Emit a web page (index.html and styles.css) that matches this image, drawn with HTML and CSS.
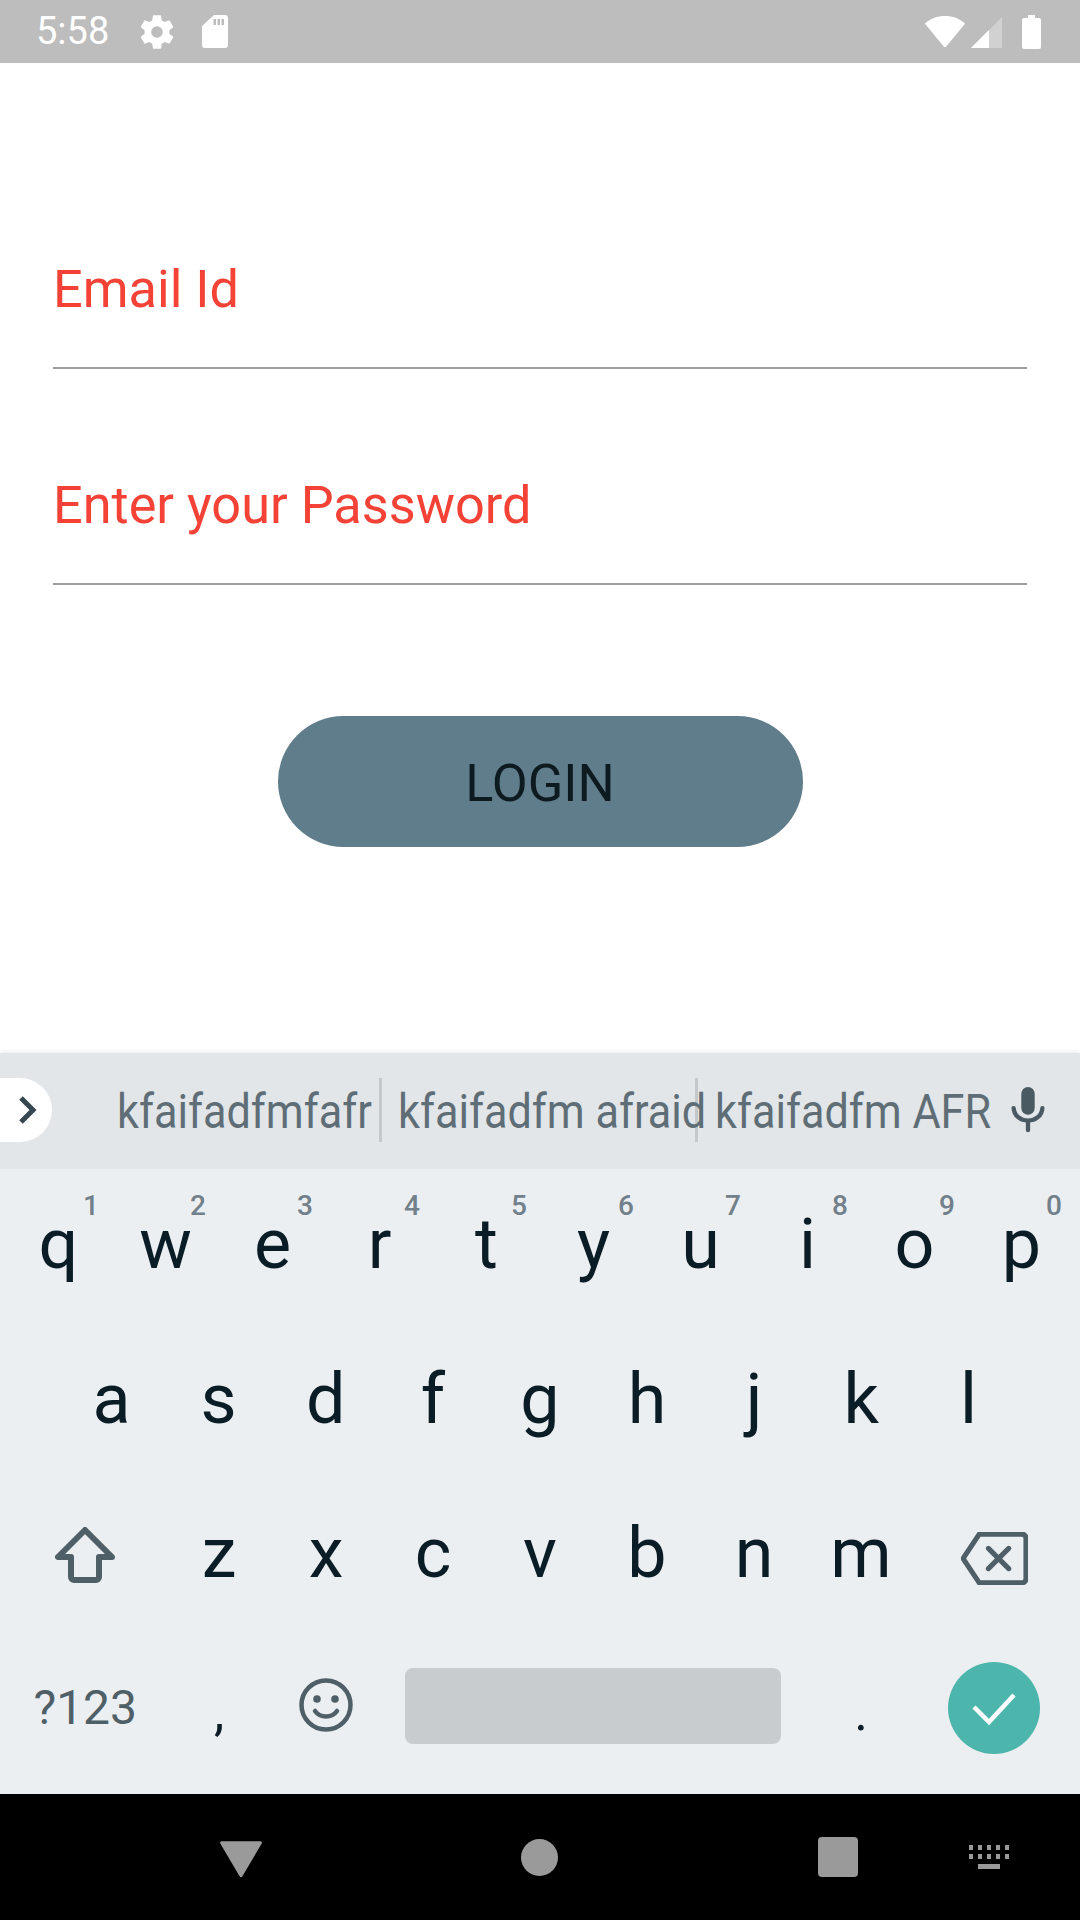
FILE: index.html
```html
<!DOCTYPE html>
<html lang="en">
<head>
<meta charset="utf-8">
<title>Login</title>
<link rel="stylesheet" href="styles.css">
</head>
<body>
<div class="screen">
  <header class="status">
    <span class="time">5:58</span>
    <svg class="ic-gear" viewBox="0 0 24 24"><path d="M19.4 13c.04-.32.07-.66.07-1s-.03-.68-.07-1l2.11-1.65a.5.5 0 0 0 .12-.64l-2-3.46a.5.5 0 0 0-.61-.22l-2.49 1a7.3 7.3 0 0 0-1.69-.98l-.38-2.65A.49.49 0 0 0 14 2h-4a.49.49 0 0 0-.49.42l-.38 2.65c-.61.25-1.17.59-1.69.98l-2.49-1a.49.49 0 0 0-.61.22l-2 3.46a.49.49 0 0 0 .12.64L4.57 11c-.04.32-.07.66-.07 1s.03.68.07 1l-2.11 1.65a.5.5 0 0 0-.12.64l2 3.46c.12.22.39.3.61.22l2.49-1c.52.4 1.08.73 1.69.98l.38 2.65c.03.24.24.42.49.42h4c.25 0 .46-.18.49-.42l.38-2.65c.61-.25 1.17-.59 1.69-.98l2.49 1c.23.09.49 0 .61-.22l2-3.46a.5.5 0 0 0-.12-.64L19.4 13zM12 15.500a3.500 3.500 0 1 1 0-7 3.500 3.500 0 0 1 0 7z"/></svg>
    <svg class="ic-sd" viewBox="0 0 26 33"><path fill-rule="evenodd" d="M12 0h11a3 3 0 0 1 3 3v27a3 3 0 0 1-3 3H3a3 3 0 0 1-3-3V11zM11.500 4v6H14V4zm4 0v6H18V4zm4 0v6H22V4z"/></svg>
    <span class="spacer"></span>
    <svg class="ic-wifi" viewBox="0 0 40 32"><path d="M20 0C12 0 6 2.500 0.500 7c-.4.300-.4.800-.1 1.200L18.700 30.500c.7.800 1.900.8 2.600 0L39.600 8.200c.3-.4.3-.9-.1-1.200C34 2.500 28 0 20 0z"/></svg>
    <svg class="ic-signal" viewBox="0 0 31 31"><path class="dim" d="M31 0v31H0z"/><path d="M18 13v18H0z"/></svg>
    <svg class="ic-batt" viewBox="0 0 19 34"><path d="M6 0h7v3h4a2 2 0 0 1 2 2v27a2 2 0 0 1-2 2H2a2 2 0 0 1-2-2V5a2 2 0 0 1 2-2h4z"/></svg>
  </header>

  <main class="form">
    <div class="field">Email Id</div>
    <div class="field">Enter your Password</div>
    <div class="btn-wrap"><button class="login">LOGIN</button></div>
  </main>

  <section class="keyboard">
    <div class="strip">
      <div class="expand"><svg viewBox="0 0 20 32"><path d="M3 4l12 12L3 28"/></svg></div>
      <div class="sugg s1"><span class="narrow">kfaifadfmfafr</span></div>
      <div class="sugg s2"><span class="narrow">kfaifadfm afraid</span></div>
      <div class="sugg s3"><span class="narrow">kfaifadfm AFR</span></div>
      <svg class="ic-mic" viewBox="0 0 34 48"><path class="fill" d="M17 29a7 7 0 0 0 7-7V7a7 7 0 0 0-14 0v15a7 7 0 0 0 7 7z"/><path class="line" d="M2 22c.500 8 7 13 15 13s14.500-5 15-13M17 35v10"/></svg>
    </div>
    <div class="keys">
      <div class="row">
        <div class="key">q<sup>1</sup></div><div class="key">w<sup>2</sup></div><div class="key">e<sup>3</sup></div><div class="key">r<sup>4</sup></div><div class="key">t<sup>5</sup></div><div class="key">y<sup>6</sup></div><div class="key">u<sup>7</sup></div><div class="key">i<sup>8</sup></div><div class="key">o<sup>9</sup></div><div class="key">p<sup>0</sup></div>
      </div>
      <div class="row row-home">
        <div class="key">a</div><div class="key">s</div><div class="key">d</div><div class="key">f</div><div class="key">g</div><div class="key">h</div><div class="key">j</div><div class="key">k</div><div class="key">l</div>
      </div>
      <div class="row">
        <div class="key wide"><svg class="ic-shift" viewBox="0 0 60 56"><path d="M30 3L3 30h13v20a3 3 0 0 0 3 3h22a3 3 0 0 0 3-3V30h13z"/></svg></div>
        <div class="key">z</div><div class="key">x</div><div class="key">c</div><div class="key">v</div><div class="key">b</div><div class="key">n</div><div class="key">m</div>
        <div class="key wide"><svg class="ic-del" viewBox="0 0 66 52"><path d="M18 2h42a4 4 0 0 1 4 4v40a4 4 0 0 1-4 4H18L2 26zM27 16l20 20M47 16L27 36"/></svg></div>
      </div>
      <div class="row">
        <div class="key wide sym">?123</div>
        <div class="key punct">,</div>
        <div class="key"><svg class="ic-emoji" viewBox="0 0 54 54"><circle class="o" cx="27" cy="27" r="24.500"/><circle cx="18" cy="21" r="3.800"/><circle cx="36" cy="21" r="3.800"/><path class="o" d="M16 33c2.500 3.500 6.500 5.500 11 5.500s8.500-2 11-5.500"/></svg></div>
        <div class="key space"><span class="bar"></span></div>
        <div class="key punct">.</div>
        <div class="key wide"><span class="enter"><svg viewBox="0 0 46 36"><path d="M3 17l15 15L43 5"/></svg></span></div>
      </div>
    </div>
  </section>

  <footer class="nav">
    <svg class="nav-back" viewBox="0 0 44 38"><path d="M2 0h40c1.500 0 2.200 1 1.700 2.300L23.500 36.500c-.7 1.200-2.300 1.200-3 0L.3 2.300C-.2 1 .5 0 2 0z"/></svg>
    <span class="nav-home"></span>
    <span class="nav-recent"></span>
    <svg class="nav-kbd" viewBox="0 0 42 24"><path d="M0 0h4v5H0zM9 0h4v5H9zM18 0h4v5h-4zM27 0h4v5h-4zM36 0h4v5h-4zM0 9h4v5H0zM9 9h4v5H9zM18 9h4v5h-4zM27 9h4v5h-4zM36 9h4v5h-4zM9 19h22v5H9z"/></svg>
  </footer>
</div>
</body>
</html>
```
FILE: styles.css
```css
* { box-sizing: border-box; }
html, body { margin: 0; padding: 0; }
body { font-family: Roboto, "Noto Sans", sans-serif; background: #fff; }
svg { display: block; }

.screen { width: 1080px; height: 1920px; display: flex; flex-direction: column; overflow: hidden; }

/* status bar */
.status { height: 63px; background: #bdbdbd; display: flex; align-items: center; padding-left: 36px; padding-right: 39px; fill: #fff; flex: none; }
.time { color: #fff; font-size: 38px; line-height: 63px; }
.ic-gear { width: 40px; height: 40px; margin-left: 28px; }
.ic-sd { width: 26px; height: 33px; margin-left: 25px; }
.spacer { flex: 1; }
.ic-wifi { width: 40px; height: 32px; }
.ic-signal { width: 31px; height: 31px; margin-left: 6px; margin-top: 1px; }
.ic-signal .dim { opacity: .3; }
.ic-batt { width: 19px; height: 34px; margin-left: 20px; }

/* form */
.form { flex: 1; padding: 0 53px; }
.field { height: 216px; border-bottom: 2px solid #9e9e9e; color: #f44336; font-size: 52.250px; display: flex; align-items: flex-end; padding-bottom: 49px; line-height: 56px; }
.field:first-child { height: 306px; }
.btn-wrap { display: flex; justify-content: center; padding-top: 131px; }
.login { width: 525px; height: 131px; border: 0; border-radius: 66px; background: #607d8b; color: #0d1a20; font: 400 52.250px Roboto, sans-serif; padding: 3px 0 0; }

/* keyboard */
.keyboard { flex: none; height: 741px; background: #eceff1; display: flex; flex-direction: column; position: relative; box-shadow: 0 -2px 4px rgba(0,0,0,.06); }
.strip { height: 116px; background: #e2e6e9; display: flex; align-items: center; flex: none; position: relative; }
.expand { width: 52px; height: 64px; background: #fff; border-radius: 0 32px 32px 0; display: flex; align-items: center; padding-left: 18px; margin-right: 65px; margin-top: -2px; flex: none; }
.expand svg { width: 20px; height: 32px; fill: none; stroke: #37474f; stroke-width: 5; }
.sugg { color: #5f6e76; font-size: 48px; height: 64px; line-height: 67px; flex: none; margin-top: -2px; white-space: nowrap; }
.narrow { display: inline-block; transform: scaleX(.9); transform-origin: left center; }
.s1 { width: 262px; }
.s2 { width: 316px; padding-left: 16px; border-left: 3px solid #c3c8cb; }
.s3 { width: 316px; padding-left: 17px; border-left: 3px solid #c3c8cb; }
.ic-mic { width: 34px; height: 46px; margin-top: -2px; flex: none; }
.ic-mic .fill { fill: #4a5a63; }
.ic-mic .line { fill: none; stroke: #4a5a63; stroke-width: 4.500; stroke-linecap: round; }

.keys { flex: 1; display: flex; flex-direction: column; padding: 0 5px 9px; margin-top: -2px; position: relative; }
.row { flex: 1; display: flex; }
.row-home { padding: 0 53px; }
.key { flex: 1 1 0; position: relative; display: flex; align-items: center; justify-content: center; color: #0a1d27; font-size: 70px; }
.key sup { position: absolute; top: 24px; right: 13px; font-size: 28px; font-weight: 500; color: #71808a; line-height: 30px; vertical-align: baseline; }
.wide { flex: 1.5 1 0; }
.space { flex: 4 1 0; }
.sym { color: #4f5f68; font-size: 48px; }
.punct { font-size: 52px; padding-top: 10px; }
.bar { display: block; width: 376px; height: 76px; background: #c8ccce; border-radius: 8px; margin-top: -4px; margin-left: -1px; }
.ic-shift { width: 60px; height: 56px; margin-top: 4px; fill: none; stroke: #4f5f68; stroke-width: 6; stroke-linejoin: round; }
.ic-del { width: 67px; height: 53px; margin-top: 10px; margin-left: -1px; fill: none; stroke: #4f5f68; stroke-width: 5; stroke-linejoin: round; stroke-linecap: round; }
.ic-emoji { width: 54px; height: 54px; margin-top: -5px; fill: #4f5f68; }
.ic-emoji .o { fill: none; stroke: #4f5f68; stroke-width: 4.500; stroke-linecap: round; }
.enter { width: 92px; height: 92px; border-radius: 50%; background: #4db6ac; display: flex; align-items: center; justify-content: center; margin-left: -1px; }
.enter svg { width: 46px; height: 36px; fill: none; stroke: #fff; stroke-width: 4.500; }

/* nav */
.nav { height: 126px; background: #000; flex: none; display: flex; align-items: center; fill: #9a9a9a; padding-left: 220px; }
.nav-back { width: 42px; height: 37px; margin-top: 5px; }
.nav-home { width: 37px; height: 37px; border-radius: 50%; background: #9a9a9a; margin-left: 259px; }
.nav-recent { width: 40px; height: 40px; border-radius: 4px; background: #9a9a9a; margin-left: 260px; }
.nav-kbd { width: 42px; height: 24px; margin-left: 111px; }
```
